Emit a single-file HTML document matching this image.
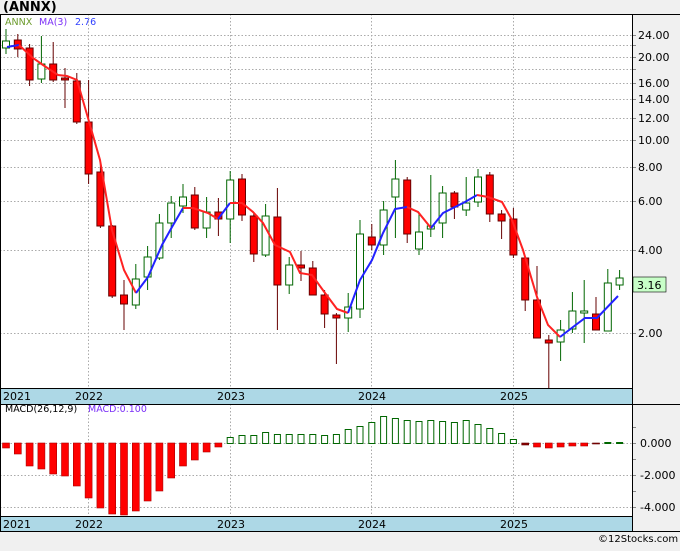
<!DOCTYPE html><html><head><meta charset="utf-8"><style>
body{margin:0;background:#f0f0f0;width:680px;height:546px;overflow:hidden;font-family:"Liberation Sans","DejaVu Sans",sans-serif}
svg text{font-family:"DejaVu Sans","Liberation Sans",sans-serif}
</style></head><body>
<svg id="s" width="680" height="546" xmlns="http://www.w3.org/2000/svg">
<rect x="0" y="0" width="680" height="546" fill="#f0f0f0"/>
<rect x="0" y="14" width="632" height="517" fill="#fff"/>
<text x="3" y="11" font-size="13" font-weight="bold" fill="#000">(ANNX)</text>
<text x="5" y="25" font-size="9.5" fill="#6a9a2a">ANNX</text>
<text x="39" y="25" font-size="9.5" fill="#7b2ff7">MA(3)</text>
<text x="75" y="25" font-size="9.5" fill="#3040ff">2.76</text>
<g id="g"></g>
<rect x="0" y="388" width="632" height="16" fill="#add8e6"/>
<rect x="0" y="516" width="632" height="15" fill="#add8e6"/>
<g font-size="11" fill="#000">
<text x="3" y="400">2021</text><text x="75" y="400">2022</text><text x="217" y="400">2023</text><text x="358" y="400">2024</text><text x="500" y="400">2025</text>
<text x="3" y="528">2021</text><text x="75" y="528">2022</text><text x="217" y="528">2023</text><text x="358" y="528">2024</text><text x="500" y="528">2025</text>
</g>
<text x="5" y="412" font-size="9.5" fill="#000">MACD(26,12,9)</text>
<text x="88" y="412" font-size="9.5" fill="#7b2ff7">MACD:0.100</text>
<line x1="0" y1="14.5" x2="680" y2="14.5" stroke="#000"/>
<line x1="0" y1="404.5" x2="680" y2="404.5" stroke="#000"/>
<line x1="0" y1="388.5" x2="632" y2="388.5" stroke="#000"/>
<line x1="0" y1="516.5" x2="632" y2="516.5" stroke="#000"/>
<line x1="0" y1="531.5" x2="680" y2="531.5" stroke="#000"/>
<line x1="0.5" y1="14" x2="0.5" y2="531" stroke="#000"/>
<line x1="632.5" y1="14" x2="632.5" y2="531" stroke="#000"/>
<rect x="633" y="277" width="33" height="15" fill="#c8ffc8" stroke="#000" stroke-width="0.6"/>
<text x="637" y="289" font-size="11" fill="#000">3.16</text>
<text x="598" y="542" font-size="10" fill="#000">©12Stocks.com</text>
</svg>
<script>
var g=document.getElementById('g'),h='';
function Y(p){return 333-120*Math.log(p/2);}
[24,22,20,18,16,14,12,10,8,6,4,2].forEach(function(p){var y=Math.round(Y(p))+.5;h+='<line x1="0" y1="'+y+'" x2="632" y2="'+y+'" stroke="#aaa" stroke-dasharray="1.5,2"/>';h+='<line x1="632" y1="'+y+'" x2="636" y2="'+y+'" stroke="#888"/>';});
[24,20,16,14,12,10,8,6,4,2].forEach(function(p){var y=Math.round(Y(p));h+='<text x="638" y="'+(y+4)+'" font-size="11" fill="#000">'+p.toFixed(2)+'</text>';});
[88,230,371,513].forEach(function(x){h+='<line x1="'+(x+.5)+'" y1="14" x2="'+(x+.5)+'" y2="388" stroke="#aaa" stroke-dasharray="1.5,2"/><line x1="'+(x+.5)+'" y1="404" x2="'+(x+.5)+'" y2="516" stroke="#aaa" stroke-dasharray="1.5,2"/>';});
[443,475,507].forEach(function(y,i){h+='<line x1="0" y1="'+(y+.5)+'" x2="632" y2="'+(y+.5)+'" stroke="#aaa" stroke-dasharray="1.5,2"/><line x1="632" y1="'+(y+.5)+'" x2="636" y2="'+(y+.5)+'" stroke="#888"/><text x="640" y="'+(y+4)+'" font-size="11">'+['0.000','-2.000','-4.000'][i]+'</text>';});
[427,459,491].forEach(function(y){h+='<line x1="632" y1="'+(y+.5)+'" x2="636" y2="'+(y+.5)+'" stroke="#888"/>';});
var C=[[41,48,29,54,0],[40,49,34,57,1],[48,80,44,86,1],[64,79,36,83,0],[64,80,42,82,1],[78,80,68,108,1],[81,122,73,124,1],[122,174,80,184,1],[172,226,160,228,1],[226,296,225,298,1],
[295,304,280,330,1],[279,305,264,309,0],[257,277,246,290,0],[223,258,214,260,0],[203,223,196,238,0],[197,206,184,213,0],[195,228,187,230,1],[212,228,197,238,0],[212,219,198,236,1],[180,219,171,243,0],[179,215,174,221,1],[216,254,213,262,1],[216,255,204,257,0],[217,285,188,330,1],[265,285,257,294,0],[265,268,251,281,1],[268,295,261,295,1],[295,314,290,328,1],[315,318,313,364,1],
[307,318,293,332,0],[234,309,220,318,0],[237,245,224,250,1],[210,245,201,255,0],[179,197,160,238,0],[180,234,177,243,1],[232,249,212,255,0],[226,229,175,237,0],[193,223,186,238,0],[193,207,191,219,1],[203,210,177,216,0],[177,202,169,207,0],[175,214,172,222,1],[214,221,210,239,1],[219,255,208,258,1],[258,300,258,311,1],[300,338,266,338,1],[340,343,335,388,1],[330,342,320,361,0],[311,329,292,333,0],[311,313,280,343,0],[314,330,297,330,1],[283,331,269,331,0],[278,285,270,290,0]];
C.forEach(function(c,i){var x=6+11.8*i;var col=c[4]?'#600':'#060';h+='<line x1="'+x+'" y1="'+c[2]+'" x2="'+x+'" y2="'+c[3]+'" stroke="'+col+'"/>';
h+='<rect x="'+(x-3.5)+'" y="'+c[0]+'" width="7" height="'+Math.max(2,c[1]-c[0])+'" fill="'+(c[4]?'#f00':'#fff')+'" stroke="'+col+'"/>';});
function line(pts,col){h+='<polyline fill="none" stroke="'+col+'" stroke-width="2" points="'+pts.join(' ')+'"/>';}
line(['7,47','19,45'],'#22f');
line(['19,45','33,58','43,65','58,75','67,76','77,80','88,118','100,160','112,230','124,270','136,293'],'#f22');
line(['136,293','148,277','162,245','172,227','183,208'],'#22f');
line(['183,208','193,208','208,213','218,219'],'#f22');
line(['218,219','230,203'],'#22f');
line(['230,203','242,203','253,212','263,223','275,245','290,252','300,273','312,275','325,293','337,309','348,313'],'#f22');
line(['348,313','360,280','372,260','383,233','395,209','407,207'],'#22f');
line(['407,207','418,212','431,228'],'#f22');
line(['431,228','443,213','455,207','465,202','477,195'],'#22f');
line(['477,195','488,197','502,202','512,220','523,250','537,297','548,325','560,337'],'#f22');
line(['560,337','573,327','585,318','597,318','618,296'],'#22f');
var M=[448,454,466,469,474,476,486,498,508,514,515,511,501,491,478,466,460,452,447,437,435,435,432,434,434,434,434,435,434,429,426,422,416,418,420,421,420,421,422,420,424,428,433,439,445,447,448,447,446,446,444,442,442];
M.forEach(function(v,i){var x=6+11.8*i-3.5;if(v>443){var d=(i==44||i==50);h+='<rect x="'+x+'" y="443" width="7" height="'+(v-443)+'" fill="'+(d?'#800':'#f00')+'" stroke="'+(d?'#600':'#a00')+'" stroke-width="0.6"/>';}
else{if(i==52)h+='<rect x="'+x+'" y="442" width="7" height="2" fill="#060"/>';else h+='<rect x="'+(x+.5)+'" y="'+(v+.5)+'" width="6" height="'+(443-v)+'" fill="#fff" stroke="#060"/>';}});
g.innerHTML=h;
</script>
</body></html>
